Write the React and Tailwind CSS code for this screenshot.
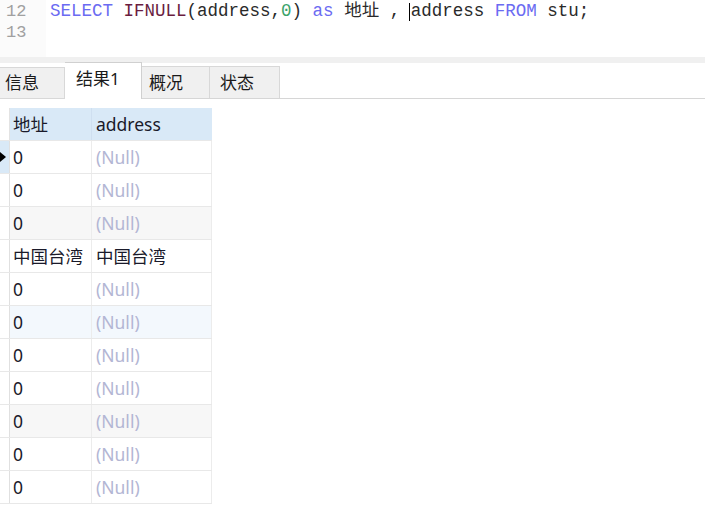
import React from "react";

const rows = [
  ["0", null],
  ["0", null],
  ["0", null],
  ["中国台湾", "中国台湾"],
  ["0", null],
  ["0", null],
  ["0", null],
  ["0", null],
  ["0", null],
  ["0", null],
  ["0", null],
];

const rowBg = (i) => {
  if (i === 2 || i === 8) return "bg-[#f7f7f7]";
  if (i === 5) return "bg-[#f3f8fd]";
  return "bg-white";
};

export default function App() {
  const sans = { fontFamily: '"Noto Sans", "Noto Sans CJK SC", sans-serif' };
  return (
    <div className="w-[705px] h-[512px] bg-white overflow-hidden" style={sans}>
      {/* editor */}
      <div className="h-[57px] flex bg-white">
        <div
          className="w-[46px] bg-[#fbfbfb] pl-[6px] pt-[1px] text-[#a0a0a0] text-[17px] leading-[21px]"
          style={{ fontFamily: '"Liberation Mono", monospace' }}
        >
          <div>12</div>
          <div>13</div>
        </div>
        <div
          className="pl-[4px] pt-[1px] text-[17.5px] leading-[21px] text-[#2a2a2a] whitespace-pre"
          style={{ fontFamily: '"Liberation Mono", "Noto Sans CJK SC", monospace' }}
        >
          <span className="text-[#6b6bf2]">SELECT</span>{" "}
          <span className="text-[#6a1d3f]">IFNULL</span>(address,
          <span className="text-[#3aa36a]">0</span>){" "}
          <span className="text-[#6b6bf2]">as</span> 地址 ,{" "}
          <span className="relative">
            <span className="absolute left-[-2px] top-[2px] h-[18px] w-[1px] bg-black" />
            address
          </span>{" "}
          <span className="text-[#6b6bf2]">FROM</span> stu;
        </div>
      </div>
      {/* strip */}
      <div className="h-[6px] bg-[#f0f0f0]" />
      {/* tabs */}
      <div className="h-[36px] flex items-end border-b border-[#d6d6d6] text-[17px] text-[#1a1a1a]">
        <div className="w-[65px] h-[32px] bg-[#f0f0f0] border-t border-r border-[#d8d8d8] flex items-center pl-[5px] -mb-px border-b">
          信息
        </div>
        <div className="w-[77px] h-[36px] bg-white border-t border-r border-[#d0d0d0] flex items-start pt-[3px] pl-[11px] -mb-px h-[37px]">
          结果1
        </div>
        <div className="w-[68px] h-[32px] bg-[#f0f0f0] border-t border-r border-[#d8d8d8] flex items-center pl-[7px]">
          概况
        </div>
        <div className="w-[70px] h-[32px] bg-[#f0f0f0] border-t border-r border-[#d8d8d8] flex items-center pl-[10px]">
          状态
        </div>
      </div>
      {/* grid */}
      <div className="mt-[9px] w-[212px] text-[17.5px] text-[#1a1a2a]">
        <div className="flex h-[32px]">
          <div className="w-[10px] bg-white border-r border-[#e3e3e3]" />
          <div className="w-[82px] bg-[#d9e9f7] border-r border-[#cfdff0] flex items-center pl-[3px]">
            地址
          </div>
          <div className="w-[120px] bg-[#d9e9f7] flex items-center pl-[4px]">address</div>
        </div>
        {rows.map((r, i) => (
          <div key={i} className="flex h-[33px] border-t border-[#e8e8e8]">
            <div
              className={`w-[10px] border-r border-[#e0e0e0] flex items-center ${
                i === 0 ? "bg-[#d9e9f7]" : "bg-white"
              }`}
            >
              {i === 0 && (
                <svg width="7" height="10" viewBox="0 0 7 10">
                  <path d="M0 0 L6 5 L0 10 Z" fill="#000" />
                </svg>
              )}
            </div>
            <div className={`w-[82px] border-r border-[#ececec] flex items-center pl-[3px] ${rowBg(i)}`}>
              {r[0]}
            </div>
            <div className={`w-[120px] border-r border-[#ececec] flex items-center pl-[4px] ${rowBg(i)}`}>
              {r[1] === null ? <span className="text-[#b3b6d4]">(Null)</span> : r[1]}
            </div>
          </div>
        ))}
        <div className="h-px w-[212px] bg-[#e8e8e8]" />
      </div>
    </div>
  );
}
